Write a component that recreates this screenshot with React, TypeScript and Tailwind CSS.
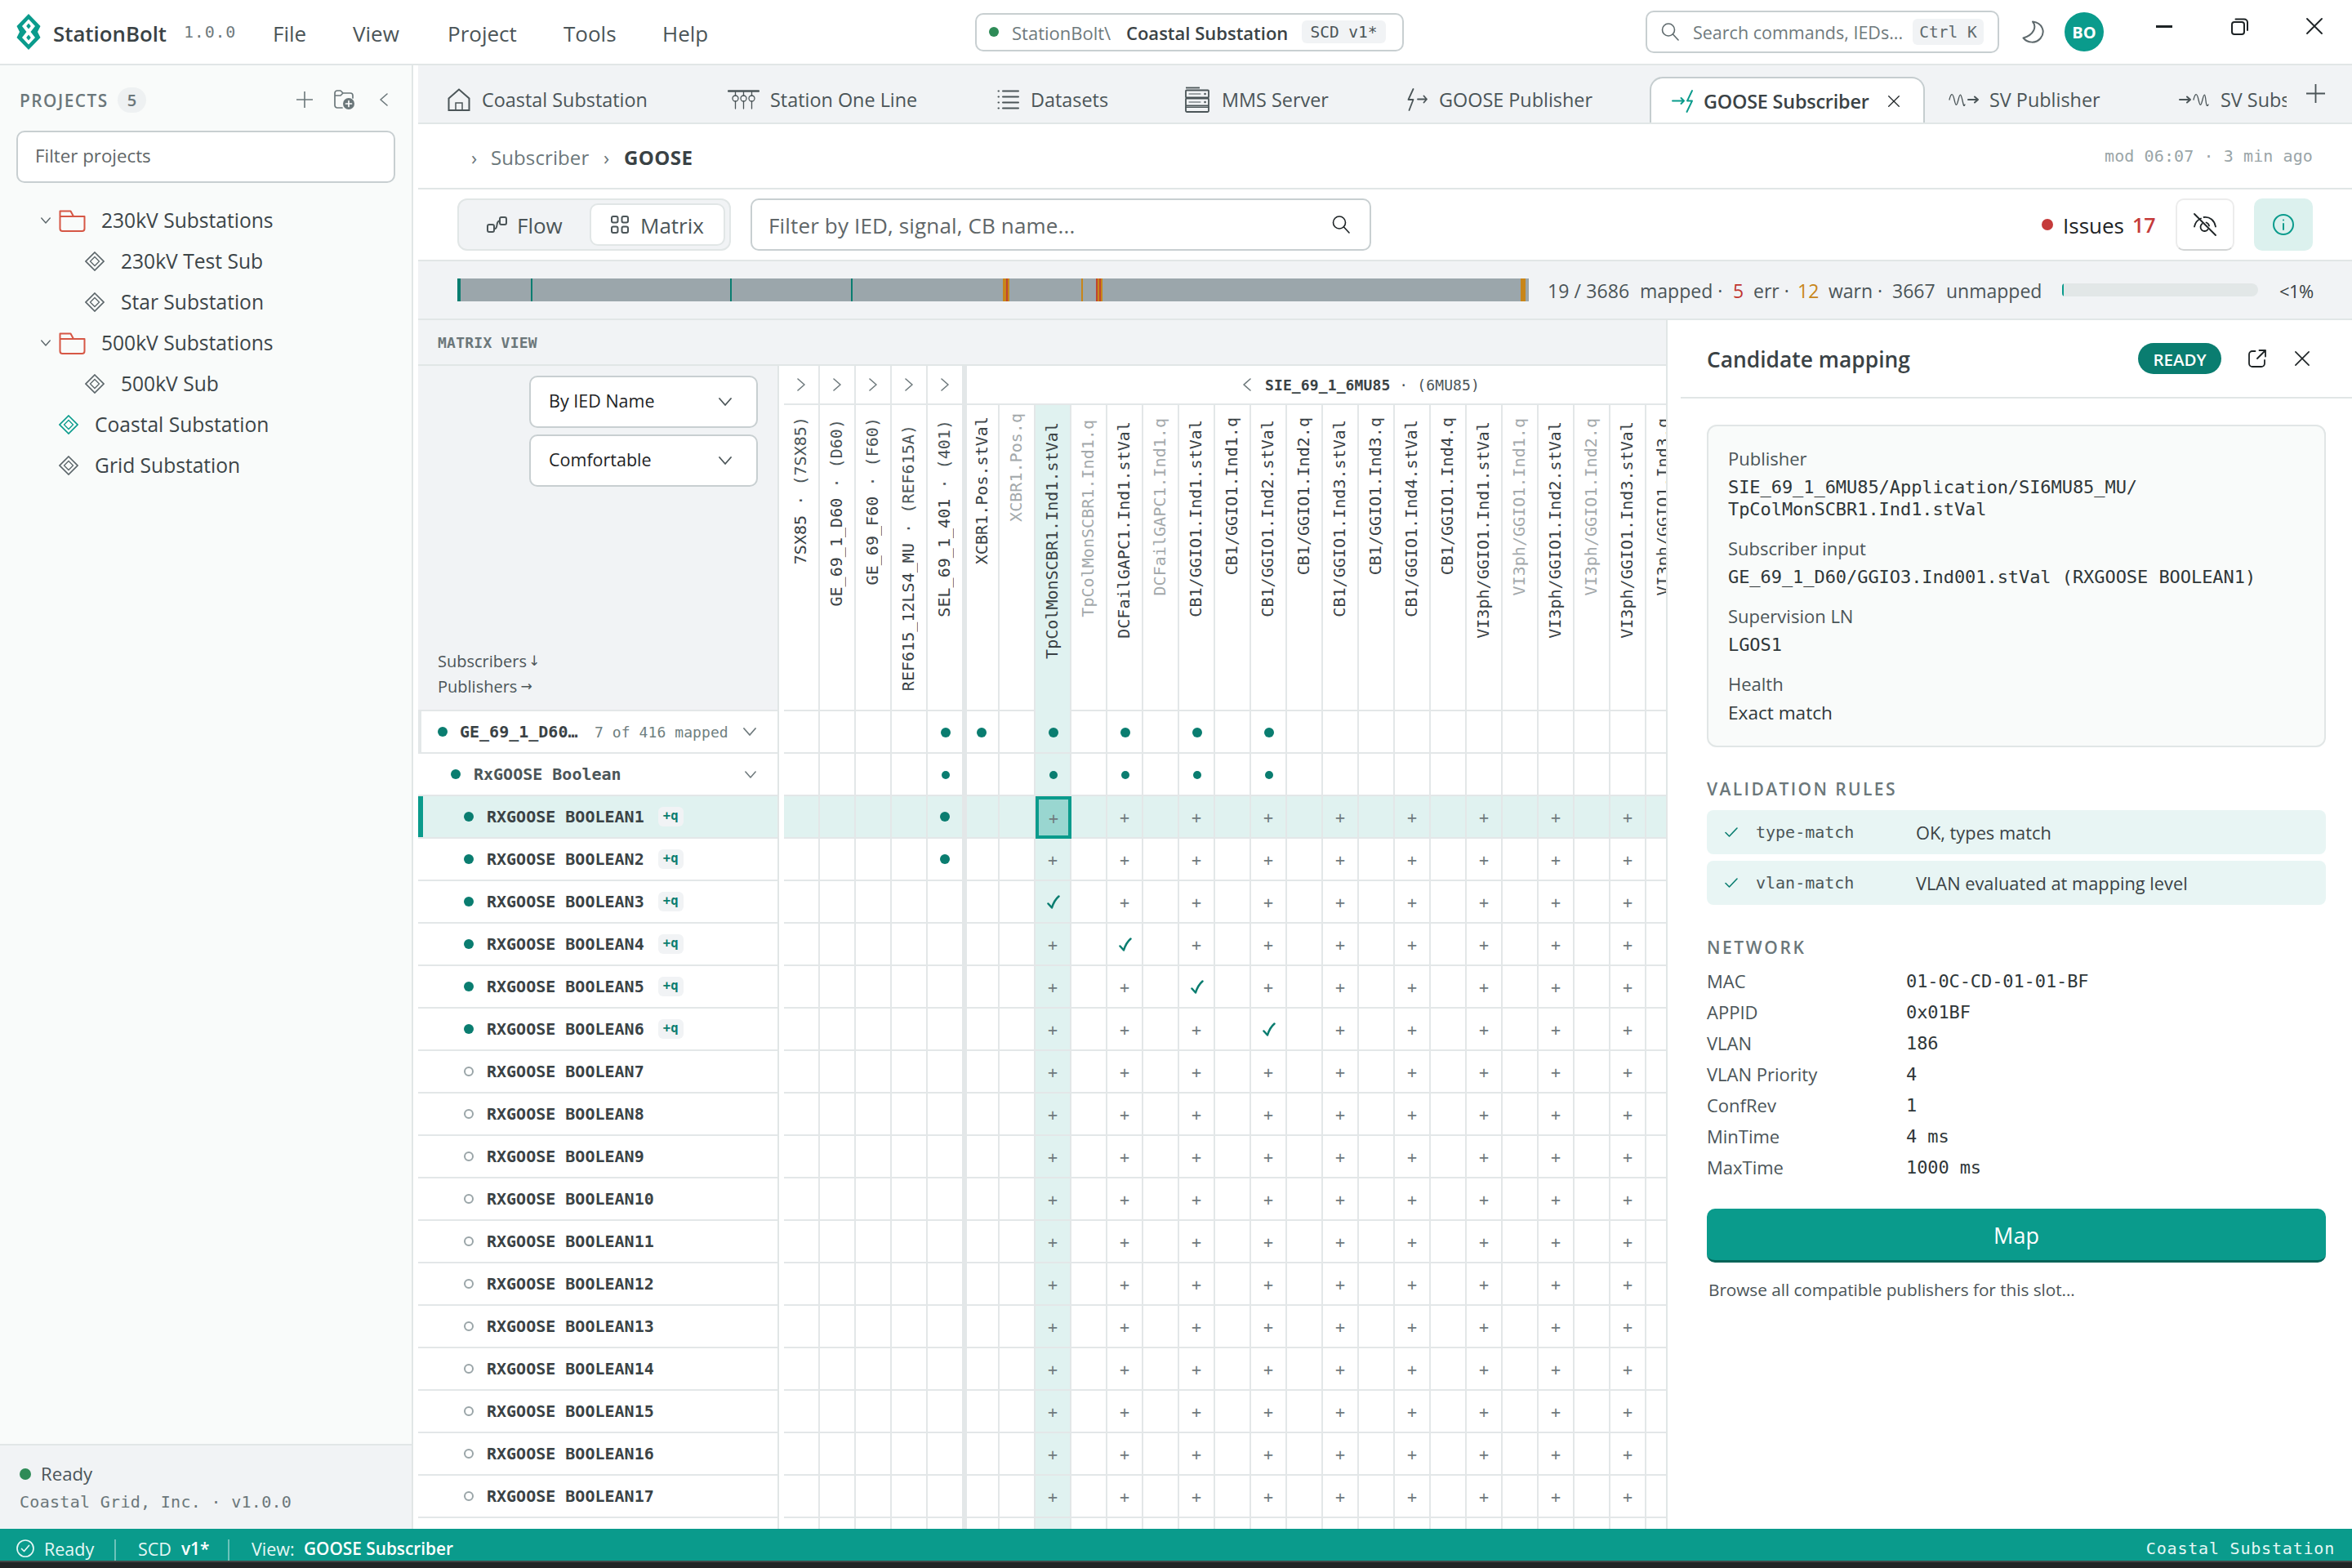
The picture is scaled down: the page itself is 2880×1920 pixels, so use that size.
import type { ReactNode } from "react";
import clsx from "clsx";

const MONO = "[font-family:'DejaVu_Sans_Mono',monospace]";

type IconProps = { className?: string };

function Svg({ box, className, width = 2, children }: { box: string; className?: string; width?: number; children: ReactNode }) {
  return (
    <svg
      viewBox={box}
      className={clsx("shrink-0", className)}
      fill="none"
      stroke="currentColor"
      strokeWidth={width}
      strokeLinecap="round"
      strokeLinejoin="round"
    >
      {children}
    </svg>
  );
}

function Logo() {
  return (
    <svg viewBox="0 0 30 44" className="h-11 w-[30px]" fill="#0a9b8c">
      <path
        fillRule="evenodd"
        d="M15 0 29.5 15 26 22l3.5 7L15 44 .5 29 4 22 .5 15ZM15 6.5 7 15l5.500 7L7 29l8 8.5 8-8.5-5.500-7 5.500-7Z"
      />
      <path d="m15 11.500 2.800 3.500-2.800 3.500-2.800-3.500ZM15 25.500l2.800 3.500-2.800 3.500-2.800-3.500Z" />
    </svg>
  );
}

const SearchIcon = ({ className }: IconProps) => (
  <Svg box="0 0 22 22" width={1.6} className={className}>
    <circle cx="9" cy="8.5" r="7.5" />
    <path d="m14.5 14 6.5 7" />
  </Svg>
);

const CloseIcon = ({ className }: IconProps) => (
  <Svg box="0 0 20 20" width={1.8} className={className}>
    <path d="m1 1 18 18M19 1 1 19" />
  </Svg>
);

const PlusIcon = ({ className }: IconProps) => (
  <Svg box="0 0 20 20" width={1.6} className={className}>
    <path d="M10 0v20M0 10h20" />
  </Svg>
);

const Chevron = ({ className }: IconProps) => (
  <Svg box="0 0 16 10" width={1.8} className={className}>
    <path d="m1 1 7 8 7-8" />
  </Svg>
);

const ChevronSide = ({ className }: IconProps) => (
  <Svg box="0 0 10 16" width={1.6} className={className}>
    <path d="m1 1 8 7-8 7" />
  </Svg>
);

const CheckIcon = ({ className }: IconProps) => (
  <Svg box="0 0 16 12" width={1.6} className={className}>
    <path d="m1 6.5 4.5 4.5L15 1" />
  </Svg>
);

const FolderIcon = () => (
  <Svg box="0 0 33 27" className="h-[27px] w-[33px] text-[#d65745]">
    <path d="M1.5 8V1.5h13L18 8M1.5 8h30v15a3 3 0 0 1-3 3h-24a3 3 0 0 1-3-3Z" />
  </Svg>
);

const DiamondIcon = ({ className }: IconProps) => (
  <Svg box="0 0 24 24" width={1.7} className={clsx("size-6", className)}>
    <path strokeLinejoin="miter" d="M12 1 23 12 12 23 1 12Z" />
    <path strokeLinejoin="miter" strokeWidth={1.3} d="m12 6.5 5.5 5.5-5.5 5.5L6.5 12Z" />
  </Svg>
);

const FolderAddIcon = () => (
  <Svg box="0 0 25 24" width={1.7} className="h-6 w-[25px]">
    <path d="M10 22H4a3 3 0 0 1-3-3V4a3 3 0 0 1 3-3h4l3 3h9a3 3 0 0 1 3 3v3M1 7h7l3-3" />
    <circle cx="18" cy="17" r="7" fill="currentColor" stroke="none" />
    <path stroke="#fff" d="M18 13.5v7M14.5 17h7" />
  </Svg>
);

const HomeIcon = () => (
  <Svg box="0 0 28 28" className="size-7">
    <path strokeLinejoin="miter" d="M1.5 12.5 14 1.5l12.5 11V27h-25Z" />
    <path strokeLinejoin="miter" strokeWidth={1.5} d="M10 27v-9h8v9" />
  </Svg>
);

const OneLineIcon = () => (
  <Svg box="0 0 39 24" width={1.3} className="h-6 w-[39px]">
    <path strokeWidth={2.5} d="M1 1.5h37" />
    <path d="M9.5 2v5M19.5 2v5M29.5 2v5M9.5 14v9M19.5 14v9M29.5 14v9" />
    <circle cx="9.5" cy="10.5" r="3.5" />
    <circle cx="19.5" cy="10.5" r="3.5" />
    <circle cx="29.5" cy="10.5" r="3.5" />
  </Svg>
);

const DatasetsIcon = () => (
  <Svg box="0 0 27 24" className="h-6 w-[27px]">
    <path d="M7 1.5h19M7 8.5h19M7 15.5h19M7 22.5h19M1.5 1.5h.5M1.5 8.5h.5M1.5 15.5h.5M1.5 22.5h.5" />
  </Svg>
);

const ServerIcon = () => (
  <Svg box="0 0 30 32" width={1.8} className="h-8 w-[30px]">
    <path strokeLinecap="butt" d="M1 1.5h17" />
    <rect x="1" y="4.5" width="28" height="9" rx="1" />
    <rect x="1" y="14.5" width="28" height="9" rx="1" />
    <path d="M1 24v5.5A1.5 1.5 0 0 0 2.5 31h25a1.5 1.5 0 0 0 1.5-1.5V24" />
    <path strokeWidth={1} d="M5 9h14M5 19h14M1 25.5h28" />
    <path strokeWidth={2.5} d="M24.5 9h.1M24.5 19h.1" />
  </Svg>
);

const GoosePubIcon = () => (
  <Svg box="0 0 25 28" width={1.8} className="h-7 w-[25px]">
    <path d="M7.5 1 1.5 14h6L2.5 27M13 13.5h11M20.5 9.5l3.5 4-3.5 4" />
  </Svg>
);

const GooseSubIcon = () => (
  <Svg box="0 0 26 28" width={1.9} className="h-7 w-[26px] text-[#0a9b8c]">
    <path d="M1 13.5h14M11.5 10l3.5 3.5-3.5 3.5M25 1l-6 12.5h6L18.5 27" />
  </Svg>
);

const SvPubIcon = () => (
  <Svg box="0 0 37 16" width={1.3} className="h-4 w-[37px]">
    <path d="M1 8C3 0 5-1 7 8s3 8 5 0 3-8 5 1 2 7 3 5" />
    <path strokeWidth={2} d="M24 8h12M32 4.5 36 8l-4 3.5" />
  </Svg>
);

const SvSubIcon = () => (
  <Svg box="0 0 37 16" width={1.3} className="h-4 w-[37px]">
    <path strokeWidth={2} d="M1 8h13M10 4.5 14 8l-4 3.5" />
    <path d="M18 8c2-8 4-9 6 0s3 8 5 0 3-8 4 1 2 7 3 5" />
  </Svg>
);

const MENU = [
  { label: "File", width: "w-[98px]" },
  { label: "View", width: "w-[116px]" },
  { label: "Project", width: "w-[142px]" },
  { label: "Tools", width: "w-[121px]" },
  { label: "Help", width: "w-[80px]" },
];

function TitleBar() {
  return (
    <header className="flex h-20 shrink-0 items-center border-b-2 border-[#e1e6e6] bg-white">
      <div className="flex w-[1194px] items-center">
        <div className="ml-5 w-[45px]">
          <Logo />
        </div>
        <span className="w-[160px] pt-1 text-[25.8px] font-semibold text-[#3a4245]">StationBolt</span>
        <span className={clsx(MONO, "w-[109px] text-[20px] tracking-[0.8px] text-[#6f7a7d]")}>1.0.0</span>
        {MENU.map((m) => (
          <span key={m.label} className={clsx("shrink-0 pt-1 text-[26px] text-[#4b5558]", m.width)}>
            {m.label}
          </span>
        ))}
      </div>
      <div className="flex h-[47px] w-[525px] items-center rounded-[10px] border-2 border-[#c8cfd1] pl-[15px] text-[22px]">
        <span className="size-3 rounded-full bg-[#2e8b57]" />
        <span className="ml-4 w-[140px] pt-0.5 text-[#6f7a7d]">StationBolt\</span>
        <span className="w-[215px] pt-0.5 font-semibold text-[#3a4245]">Coastal Substation</span>
        <span className={clsx(MONO, "flex h-7 w-[103px] items-center justify-center rounded-md bg-[#f1f3f5] pt-0.5 text-[19.5px] text-[#4b5558]")}>
          SCD v1*
        </span>
      </div>
      <div className="ml-[296px] flex h-[52px] w-[433px] items-center rounded-[10px] border-2 border-[#c8cfd1] pl-[17px]">
        <SearchIcon className="size-[22px] text-[#5f6a6d]" />
        <span className="ml-[17px] w-[269px] whitespace-nowrap pt-0.5 text-[21.5px] text-[#6f7a7d]">Search commands, IEDs...</span>
        <span className={clsx(MONO, "flex h-8 w-[87px] items-center justify-center rounded-md bg-[#f1f3f5] pt-0.5 text-[19.5px] text-[#5f6a6d]")}>
          Ctrl K
        </span>
      </div>
      <Svg box="0 0 28 28" className="ml-7 size-7 text-[#5f6a6d]">
        <path d="M13 1.5c5 6 2 16-11.5 20C7 28 17 28.5 22.5 22 29 14 25 3 13 1.5Z" />
      </Svg>
      <span className="ml-6 flex size-12 items-center justify-center rounded-full bg-[#0a9b8c] pt-0.5 text-[20px] font-bold text-white">BO</span>
      <div className="mb-3.5 ml-16 flex items-center text-[#1d2325]">
        <span className="h-[3px] w-5 bg-current" />
        <Svg box="0 0 21 21" className="ml-[72px] size-[21px]">
          <rect x="1" y="5" width="15" height="15" rx="3" />
          <path d="M5.5 1.5H16a4 4 0 0 1 4 4V15" />
        </Svg>
        <CloseIcon className="ml-[71px] size-5" />
      </div>
    </header>
  );
}

function TreeFolder({ label }: { label: string }) {
  return (
    <div className="flex h-[50px] items-center pl-[50px]">
      <Chevron className="h-2 w-3 text-[#5c666a]" />
      <span className="ml-2.5 flex w-[52px]">
        <FolderIcon />
      </span>
      {label}
    </div>
  );
}

function TreeItem({ label, nested, active }: { label: string; nested?: boolean; active?: boolean }) {
  return (
    <div className={clsx("flex h-[50px] items-center gap-5", nested ? "pl-[104px]" : "pl-[72px]")}>
      <DiamondIcon className={active ? "text-[#0a9b8c]" : "text-[#5c666a]"} />
      {label}
    </div>
  );
}

function Sidebar() {
  return (
    <aside className="flex w-[506px] shrink-0 flex-col border-r-2 border-[#e1e6e6] bg-[#f9fbfa]">
      <div className="flex h-20 items-center pl-6 pt-1 text-[#6b777a]">
        <span className="w-[120px] pt-1 text-[20.8px] font-semibold tracking-[1.5px]">PROJECTS</span>
        <span className="flex h-[31px] w-[35px] items-center justify-center rounded-full bg-[#eef1f2] pt-px text-[20px] font-semibold">5</span>
        <PlusIcon className="ml-[184px] size-5" />
        <span className="ml-[26px]">
          <FolderAddIcon />
        </span>
        <ChevronSide className="ml-[31px] h-[18px] w-[10px] rotate-180" />
      </div>
      <div className="ml-5 flex h-16 w-[464px] items-center rounded-[10px] border-2 border-[#c8cfd1] bg-white pb-[3px] pl-[21px] text-[22.3px] text-[#5f6668]">
        Filter projects
      </div>
      <nav className="mt-[21px] flex flex-1 flex-col whitespace-nowrap text-[24.6px] text-[#3c4548]">
        <TreeFolder label="230kV Substations" />
        <TreeItem nested label="230kV Test Sub" />
        <TreeItem nested label="Star Substation" />
        <TreeFolder label="500kV Substations" />
        <TreeItem nested label="500kV Sub" />
        <TreeItem active label="Coastal Substation" />
        <TreeItem label="Grid Substation" />
      </nav>
      <div className="h-[104px] border-t-2 border-[#e1e6e6] bg-[#f1f3f5] pl-6 pt-[18px]">
        <div className="flex h-[34px] items-center gap-3 text-[22.2px] text-[#4b5558]">
          <span className="size-3.5 rounded-full bg-[#2e8b57]" />
          Ready
        </div>
        <div className={clsx(MONO, "flex h-[34px] items-center whitespace-nowrap text-[20px] tracking-[0.3px] text-[#6b777a]")}>
          Coastal Grid, Inc. · v1.0.0
        </div>
      </div>
    </aside>
  );
}

const TABS = [
  { label: "Coastal Substation", icon: HomeIcon, width: "w-[343px]", gap: "gap-3.5" },
  { label: "Station One Line", icon: OneLineIcon, width: "w-[330px]", gap: "gap-[13px]" },
  { label: "Datasets", icon: DatasetsIcon, width: "w-[230px]", gap: "gap-3.5" },
  { label: "MMS Server", icon: ServerIcon, width: "w-[272px]", gap: "gap-[15px]" },
  { label: "GOOSE Publisher", icon: GoosePubIcon, width: "w-[297px]", gap: "gap-3.5" },
];

function TabBar() {
  return (
    <div className="flex h-[72px] shrink-0 items-end border-b-2 border-[#e1e6e6] bg-[#f1f3f5] pl-9 text-[23.4px] text-[#4b5558]">
      {TABS.map(({ label, icon: Icon, width, gap }) => (
        <div key={label} className={clsx("flex h-[57px] shrink-0 items-center whitespace-nowrap", width, gap)}>
          <Icon />
          <span className="pt-0.5">{label}</span>
        </div>
      ))}
      <div className="flex h-14 w-[337px] shrink-0 items-center rounded-t-2xl border-2 border-b-0 border-[#c5cdcf] bg-white pl-[25px] pt-0.5 text-[#3a4245]">
        <GooseSubIcon />
        <span className="ml-[13px] w-[226px] whitespace-nowrap pt-0.5 font-semibold tracking-[-0.2px]">GOOSE Subscriber</span>
        <CloseIcon className="size-3.5 text-[#1d2325]" />
      </div>
      <div className="flex h-[57px] w-[443px] items-center overflow-hidden whitespace-nowrap pl-[29px]">
        <SvPubIcon />
        <span className="ml-[13px] w-[232px] shrink-0 pt-0.5">SV Publisher</span>
        <SvSubIcon />
        <span className="ml-3.5 pt-0.5">SV Subscriber</span>
      </div>
      <PlusIcon className="mb-6 ml-6 size-[23px]" />
    </div>
  );
}

function Breadcrumb() {
  return (
    <div className="flex h-20 shrink-0 items-center border-b-2 border-[#e1e6e6] pl-[65px] pr-12 pt-[3px] text-[24px] text-[#6b777a]">
      <span className="w-6">›</span>
      <span className="w-[138px] tracking-[0.1px]">Subscriber</span>
      <span className="w-[25px]">›</span>
      <span className="flex-1 font-bold tracking-[0.4px] text-[#3a4245]">GOOSE</span>
      <span className={clsx(MONO, "pb-1 text-[20px] tracking-[0.1px] text-[#9aa5a8]")}>mod 06:07 · 3 min ago</span>
    </div>
  );
}

function Toolbar() {
  return (
    <div className="flex h-[88px] shrink-0 items-center border-b-2 border-[#e1e6e6] px-12 text-[26px] text-[#4b5558]">
      <div className="flex h-16 w-[335px] items-center rounded-xl border-2 border-[#e1e6e6] bg-[#f1f3f5]">
        <div className="flex w-[160px] items-center gap-3 pl-[34px]">
          <Svg box="0 0 25 20" className="h-5 w-[25px]">
            <rect x="1" y="10" width="8" height="9" rx="2" />
            <rect x="16" y="1" width="8" height="9" rx="2" />
            <path d="M9 15.5c6 0 1-10 7-10" />
          </Svg>
          <span className="pt-0.5">Flow</span>
        </div>
        <div className="flex h-[52px] w-[166px] items-center gap-3.5 rounded-[10px] border-2 border-[#e1e6e6] bg-white pl-6">
          <Svg box="0 0 22 22" className="size-[22px]">
            <rect x="1" y="1" width="7.5" height="7.5" rx="2" />
            <rect x="13.5" y="1" width="7.5" height="7.5" rx="2" />
            <rect x="1" y="13.5" width="7.5" height="7.5" rx="2" />
            <rect x="13.5" y="13.5" width="7.5" height="7.5" rx="2" />
          </Svg>
          <span className="pt-0.5">Matrix</span>
        </div>
      </div>
      <div className="ml-6 flex h-16 w-[760px] items-center justify-between rounded-[10px] border-2 border-[#c8cfd1] pl-5 pr-6 text-[#5f6668]">
        <span className="pt-0.5 tracking-[0.15px]">Filter by IED, signal, CB name...</span>
        <SearchIcon className="size-[22px] text-[#1d2325]" />
      </div>
      <span className="ml-auto size-3.5 rounded-full bg-[#c53b3b]" />
      <span className="ml-3 pt-0.5 text-[#1d2325]">Issues</span>
      <span className="ml-2.5 w-[53px] pt-0.5 text-[25px] font-semibold text-[#c53b3b]">17</span>
      <button type="button" className="flex h-16 w-[72px] items-center justify-center rounded-[10px] border-2 border-[#ececec] border-b-[#d2d4d4] text-[#1d2325]">
        <Svg box="0 0 28 28" width={1.8} className="size-7">
          <path d="M1 1l26 26M9 6.5C4 8.5 2 12 1 16.5M12.5 5C20 4 25.5 9 27 16.5" />
          <path d="M10.5 13a5 5 0 1 0 7 7M15.5 11.5a5 5 0 0 1 3.5 4" />
        </Svg>
      </button>
      <button type="button" className="ml-6 flex h-16 w-[72px] items-center justify-center rounded-[10px] bg-[#dcf1ee] text-[#0a9b8c]">
        <Svg box="0 0 26 26" className="size-[26px]">
          <circle cx="13" cy="13" r="12" />
          <path d="M13 12v7M13 7.5v.1" />
        </Svg>
      </button>
    </div>
  );
}

// one entry per stretch of the 1312px coverage bar
const COVERAGE = [
  { w: 4, c: "#0a7d70" },
  { w: 86, c: "" },
  { w: 2, c: "#0a7d70" },
  { w: 242, c: "" },
  { w: 2, c: "#0a7d70" },
  { w: 146, c: "" },
  { w: 2, c: "#0a7d70" },
  { w: 184, c: "" },
  { w: 4, c: "#c8861a" },
  { w: 2, c: "#c0452f" },
  { w: 2, c: "#c8861a" },
  { w: 88, c: "" },
  { w: 2, c: "#c8861a" },
  { w: 16, c: "" },
  { w: 2, c: "#c0452f" },
  { w: 2, c: "#c8861a" },
  { w: 2, c: "#c0452f" },
  { w: 2, c: "#c8861a" },
  { w: 512, c: "" },
  { w: 6, c: "#c8861a" },
  { w: 4, c: "" },
];

function CoverageStrip() {
  return (
    <div className="flex h-[72px] shrink-0 items-center whitespace-nowrap border-b-2 border-[#e1e6e6] bg-[#f1f3f5] pl-12 text-[23px] text-[#4b5558]">
      <div className="flex h-7 w-[1312px] shrink-0 bg-[#9ba6ab]">
        {COVERAGE.map((s, i) => (
          <span key={i} style={{ width: s.w, background: s.c || undefined }} />
        ))}
      </div>
      <div className="flex w-[653px] shrink-0 pl-[23px] pt-0.5">
        <span className="w-[113px] tracking-[0.1px]">19 / 3686</span>
        <span className="w-[114px]">mapped ·</span>
        <span className="w-[25px] text-[#c0352f]">5</span>
        <span className="w-[54px]">err ·</span>
        <span className="w-[38px] text-[#c8861a]">12</span>
        <span className="w-[78px]">warn ·</span>
        <span className="w-[66px]">3667</span>
        <span>unmapped</span>
      </div>
      <div className="h-4 w-[240px] shrink-0 overflow-hidden rounded-l-sm rounded-r-lg bg-[#e2e7e7]">
        <div className="h-full w-0.5 bg-[#0a9b8c]" />
      </div>
      <span className="ml-[26px] pt-0.5 text-[22px] tracking-[-0.6px] text-[#3a4245]">&lt;1%</span>
    </div>
  );
}

type Column = { name: string; type?: string; muted?: boolean; mappable?: boolean };

const COLUMNS: Column[] = [
  { name: "7SX85", type: "(7SX85)" },
  { name: "GE_69_1_D60", type: "(D60)" },
  { name: "GE_69_F60", type: "(F60)" },
  { name: "REF615_12LS4_MU", type: "(REF615A)" },
  { name: "SEL_69_1_401", type: "(401)" },
  { name: "XCBR1.Pos.stVal" },
  { name: "XCBR1.Pos.q", muted: true },
  { name: "TpColMonSCBR1.Ind1.stVal", mappable: true },
  { name: "TpColMonSCBR1.Ind1.q", muted: true },
  { name: "DCFailGAPC1.Ind1.stVal", mappable: true },
  { name: "DCFailGAPC1.Ind1.q", muted: true },
  { name: "CB1/GGIO1.Ind1.stVal", mappable: true },
  { name: "CB1/GGIO1.Ind1.q" },
  { name: "CB1/GGIO1.Ind2.stVal", mappable: true },
  { name: "CB1/GGIO1.Ind2.q" },
  { name: "CB1/GGIO1.Ind3.stVal", mappable: true },
  { name: "CB1/GGIO1.Ind3.q" },
  { name: "CB1/GGIO1.Ind4.stVal", mappable: true },
  { name: "CB1/GGIO1.Ind4.q" },
  { name: "VI3ph/GGIO1.Ind1.stVal", mappable: true },
  { name: "VI3ph/GGIO1.Ind1.q", muted: true },
  { name: "VI3ph/GGIO1.Ind2.stVal", mappable: true },
  { name: "VI3ph/GGIO1.Ind2.q", muted: true },
  { name: "VI3ph/GGIO1.Ind3.stVal", mappable: true },
  { name: "VI3ph/GGIO1.Ind3.q" },
];

const FIRST_SIGNAL = 5;
const SELECTED_COL = 7;
const GROUP_DOTS = [4, 5, 7, 9, 11, 13];
const SUBGROUP_DOTS = [4, 7, 9, 11, 13];
// input number -> column that already carries its mapping
const MAPPED: Record<number, number> = { 3: 7, 4: 9, 5: 11, 6: 13 };

const INPUTS = Array.from({ length: 17 }, (_, i) => i + 1);

function Cell({ col, selectedRow, children }: { col: number; selectedRow?: boolean; children?: ReactNode }) {
  return (
    <div
      className={clsx(
        "flex h-13 w-11 shrink-0 items-center justify-center border-b-2 border-r-2 border-[#e3e7e8]",
        col === FIRST_SIGNAL && "border-l-4",
        (selectedRow || col === SELECTED_COL) && "bg-[#e0f2f0]",
      )}
    >
      {children}
    </div>
  );
}

function inputCell(input: number, col: number) {
  if (col === 4 && input <= 2) return <span className="size-3 rounded-full bg-[#0a7d70]" />;
  if (MAPPED[input] === col) {
    return (
      <Svg box="0 0 16 17" width={2.5} className="ml-0.5 h-[17px] w-4 text-[#0a7d70]">
        <path d="M1.5 10.5 6 15.5C8 9 11 4.5 14.5 1.5" />
      </Svg>
    );
  }
  if (COLUMNS[col].mappable) return <span className={clsx(MONO, "pt-px text-[20px] leading-none text-[#6f7a7d]")}>+</span>;
  return null;
}

function MatrixHeader() {
  return (
    <>
      <div className="flex h-12">
        {COLUMNS.slice(0, FIRST_SIGNAL).map((c) => (
          <div key={c.name} className="flex w-11 shrink-0 items-center justify-center border-b-2 border-r-2 border-[#e3e7e8]">
            <ChevronSide className="h-4 w-[10px] text-[#6f7a7d]" />
          </div>
        ))}
        <div className={clsx(MONO, "flex flex-1 items-center border-b-2 border-l-4 border-[#e3e7e8] pl-[338px] text-[18px] tracking-[0.12px] text-[#3a4245]")}>
          <ChevronSide className="mr-[17px] h-4 w-[10px] rotate-180 text-[#6f7a7d]" />
          <span className="font-bold">SIE_69_1_6MU85</span>
          <span className="whitespace-pre text-[#4b5558]"> · (6MU85)</span>
        </div>
      </div>
      <div className="flex h-[375px]">
        {COLUMNS.map((c, i) => {
          const text = c.type ? `${c.name} · ${c.type}` : c.name;
          return (
            <div
              key={c.name}
              className={clsx(
                "flex w-11 shrink-0 justify-center border-r-2 border-[#e3e7e8] pr-0.5",
                i === FIRST_SIGNAL && "border-l-4",
                i === SELECTED_COL ? "bg-[#e0f2f0]" : "border-b-2",
              )}
              style={{ paddingTop: 1 + text.length * 0.85 }}
            >
              <span
                className={clsx(
                  MONO,
                  "h-fit rotate-180 whitespace-nowrap text-[20px] leading-none tracking-[0.04px] [writing-mode:vertical-rl]",
                  c.muted ? "text-[#a3a9ab]" : "text-[#3a4245]",
                )}
              >
                {c.name}
                {c.type && <span className="text-[#4b5558]"> · {c.type}</span>}
              </span>
            </div>
          );
        })}
      </div>
    </>
  );
}

function SelectBox({ label }: { label: string }) {
  return (
    <div className="flex h-16 w-[280px] items-center justify-between rounded-[10px] border-2 border-[#c8cfd1] bg-white pb-px pl-[22px] pr-[30px] text-[21.5px] text-[#1d2325]">
      {label}
      <Chevron className="h-2.5 w-4 text-[#4b5558]" />
    </div>
  );
}

function RowHeaders() {
  return (
    <div className="flex w-[442px] shrink-0 flex-col border-r-2 border-[#e1e6e6]">
      <div className="flex h-[423px] shrink-0 flex-col items-end gap-2 border-b-2 border-[#e3e7e8] bg-[#f1f3f5] pr-6 pt-3 text-[20px] text-[#4b5558]">
        <SelectBox label="By IED Name" />
        <SelectBox label="Comfortable" />
        <div className="mb-[13px] mt-auto w-[392px] leading-[31px]">
          <div className="flex gap-0.5">
            Subscribers<span className="text-[17px] [font-family:'DejaVu_Sans',sans-serif]">↓</span>
          </div>
          <div className="flex gap-1">
            Publishers<span className="text-[17px] [font-family:'DejaVu_Sans',sans-serif]">→</span>
          </div>
        </div>
      </div>
      <div className={clsx(MONO, "text-[20px]")}>
        <div className="flex h-13 items-center border-b-2 border-l-4 border-[#e3e7e8] pl-5">
          <span className="size-3 rounded-full bg-[#0a7d70]" />
          <span className="ml-[15px] w-[165px] font-bold text-[#3a4245]">GE_69_1_D60…</span>
          <span className="w-[182px] text-[18px] tracking-[0.08px] text-[#6f7f80]">7 of 416 mapped</span>
          <Chevron className="h-2.5 w-4 text-[#6f7a7d]" />
        </div>
        <div className="flex h-13 items-center border-b-2 border-[#e3e7e8] pl-10">
          <span className="size-3 rounded-full bg-[#0a7d70]" />
          <span className="ml-4 w-[332px] font-bold text-[#4b5558]">RxGOOSE Boolean</span>
          <Chevron className="h-[9px] w-3.5 text-[#6f7a7d]" />
        </div>
        {INPUTS.map((n) => (
          <div
            key={n}
            className={clsx(
              "flex h-13 items-center border-b-2 border-[#e3e7e8] pl-14",
              n === 1 && "bg-[linear-gradient(90deg,#0a9b8c_6px,#e0f2f0_6px)]",
            )}
          >
            <span className={clsx("size-3 rounded-full", n <= 6 ? "bg-[#0a7d70]" : "border-2 border-[#9aa5a8]")} />
            <span className="ml-4 font-bold text-[#3a4245]">RXGOOSE BOOLEAN{n}</span>
            {n <= 6 && (
              <span className="ml-[17px] flex h-6 w-[31px] items-center justify-center rounded-md bg-[#f1f3f5] text-[15.5px] font-bold text-[#0a7d70]">
                +q
              </span>
            )}
          </div>
        ))}
      </div>
    </div>
  );
}

function Matrix() {
  return (
    <section className="flex w-[1528px] shrink-0 flex-col overflow-hidden">
      <div className={clsx(MONO, "flex h-14 shrink-0 items-center border-b-2 border-[#e1e6e6] bg-[#f1f3f5] pl-6 text-[18px] font-bold tracking-[0.25px] text-[#6b777a]")}>
        MATRIX VIEW
      </div>
      <div className="flex min-h-0 flex-1 overflow-hidden">
        <RowHeaders />
        <div className="ml-1.5 w-[1080px] shrink-0 overflow-hidden">
          <MatrixHeader />
          <div className="flex">
            {COLUMNS.map((c, i) => (
              <Cell key={c.name} col={i}>
                {GROUP_DOTS.includes(i) && (
                  <span className={clsx("mt-0.5 size-3 rounded-full bg-[#0a7d70]", i === FIRST_SIGNAL ? "mr-0.5" : "ml-0.5")} />
                )}
              </Cell>
            ))}
          </div>
          <div className="flex">
            {COLUMNS.map((c, i) => (
              <Cell key={c.name} col={i}>
                {SUBGROUP_DOTS.includes(i) && <span className="ml-0.5 mt-0.5 size-2.5 rounded-full bg-[#0a7d70]" />}
              </Cell>
            ))}
          </div>
          {INPUTS.map((n) => (
            <div key={n} className="flex">
              {COLUMNS.map((c, i) =>
                n === 1 && i === SELECTED_COL ? (
                  <div key={c.name} className="flex h-13 w-11 shrink-0 items-center justify-center border-4 border-[#0a9b8c] bg-[#99d6d0]">
                    {inputCell(n, i)}
                  </div>
                ) : (
                  <Cell key={c.name} col={i} selectedRow={n === 1}>
                    {inputCell(n, i)}
                  </Cell>
                ),
              )}
            </div>
          ))}
          <div className="flex">
            {COLUMNS.map((c, i) => (
              <Cell key={c.name} col={i} />
            ))}
          </div>
        </div>
      </div>
    </section>
  );
}

const DETAILS = [
  { label: "Publisher", value: ["SIE_69_1_6MU85/Application/SI6MU85_MU/", "TpColMonSCBR1.Ind1.stVal"], mono: true },
  { label: "Subscriber input", value: ["GE_69_1_D60/GGIO3.Ind001.stVal (RXGOOSE BOOLEAN1)"], mono: true },
  { label: "Supervision LN", value: ["LGOS1"], mono: true },
  { label: "Health", value: ["Exact match"] },
];

const RULES = [
  { id: "type-match", message: "OK, types match" },
  { id: "vlan-match", message: "VLAN evaluated at mapping level" },
];

const NETWORK = [
  ["MAC", "01-0C-CD-01-01-BF"],
  ["APPID", "0x01BF"],
  ["VLAN", "186"],
  ["VLAN Priority", "4"],
  ["ConfRev", "1"],
  ["MinTime", "4 ms"],
  ["MaxTime", "1000 ms"],
];

function DetailPanel() {
  return (
    <section className="flex flex-1 flex-col border-l-2 border-[#e1e6e6] pl-4">
      <div className="flex h-24 shrink-0 items-center border-b-2 border-[#e1e6e6] pl-8">
        <h2 className="flex-1 pt-1 text-[26.4px] font-semibold text-[#3a4245]">Candidate mapping</h2>
        <span className="flex h-[38px] w-[102px] items-center justify-center rounded-full bg-[#0a7d70] pt-0.5 text-[20.5px] font-semibold text-white">
          READY
        </span>
        <Svg box="0 0 22 22" width={1.8} className="ml-[33px] size-[22px] text-[#1d2325]">
          <path d="M8.5 2H5a4 4 0 0 0-4 4v11a4 4 0 0 0 4 4h11a4 4 0 0 0 4-4v-4M13.5 1H21v7.5M21 1 11 11" />
        </Svg>
        <CloseIcon className="ml-[35px] mr-[52px] size-[18px] text-[#1d2325]" />
      </div>
      <div className="flex flex-col px-8 pt-8 text-[22px] text-[#4b5558]">
        <div className="flex h-[395px] flex-col rounded-xl border-2 border-[#e1e6e6] bg-[#f9fbfa] pl-6 pt-[23px]">
          {DETAILS.map((d) => (
            <div key={d.label} className="mb-[17px]">
              <div className="h-8 leading-8">{d.label}</div>
              {d.value.map((line, i) => (
                <div
                  key={line}
                  className={clsx(
                    "whitespace-nowrap text-[#2f3739]",
                    d.mono ? "leading-[27px] tracking-[-0.06px] [font-family:'DejaVu_Sans_Mono',monospace]" : "pt-1 text-[22.6px] leading-8",
                    d.mono && i === 0 && "-mt-px pt-[7px]",
                    i === 1 && "mb-px",
                    d.value.length === 1 && d.mono && "mb-px",
                  )}
                >
                  {line}
                </div>
              ))}
            </div>
          ))}
        </div>
        <h3 className="mt-[35px] h-8 text-[21px] font-semibold leading-8 tracking-[2.4px] text-[#6b777a]">VALIDATION RULES</h3>
        <div className="mt-2.5 flex flex-col gap-2">
          {RULES.map((r) => (
            <div key={r.id} className="flex h-[54px] items-center rounded-lg bg-[#e8f5f4] pl-[22px]">
              <CheckIcon className="h-3 w-4 text-[#0a7d70]" />
              <span className={clsx(MONO, "ml-[22px] w-[196px] text-[20px]")}>{r.id}</span>
              <span className="pt-0.5 text-[21.8px] text-[#3a4245]">{r.message}</span>
            </div>
          ))}
        </div>
        <h3 className="mt-[36px] h-8 text-[21px] font-semibold leading-8 tracking-[2.6px] text-[#6b777a]">NETWORK</h3>
        <div className="mt-1.5">
          {NETWORK.map(([label, value]) => (
            <div key={label} className="flex h-[38px] items-center">
              <span className="w-[244px]">{label}</span>
              <span className={clsx(MONO, "text-[22px] tracking-[-0.1px] text-[#2f3739]")}>{value}</span>
            </div>
          ))}
        </div>
        <button type="button" className="mt-8 flex h-[66px] items-center justify-center rounded-[10px] border-b-[3px] border-[#066459] bg-[#0a9b8c] pt-1 text-[27px] text-white">
          Map
        </button>
        <div className="mt-[17px] pl-0.5 text-[20.8px] leading-8 tracking-[-0.05px]">Browse all compatible publishers for this slot...</div>
      </div>
    </section>
  );
}

function StatusBar() {
  return (
    <footer className="shrink-0 bg-[#212526]">
      <div className="flex h-[39px] items-end bg-[#0a9b8c] pl-5 text-[21.5px] leading-[29px] text-[#e6f7f5]">
        <Svg box="0 0 22 22" width={1.7} className="mb-1 size-[22px]">
          <circle cx="11" cy="11" r="10" />
          <path d="m6.5 11.5 3 3 6-7" />
        </Svg>
        <span className="ml-3 w-[86px]">Ready</span>
        <span className="h-[26px] w-0.5 bg-white/40" />
        <span className="ml-[27px] w-[53px]">SCD</span>
        <span className="w-[57px] text-[20.8px] font-semibold text-white">v1*</span>
        <span className="h-[26px] w-0.5 bg-white/40" />
        <span className="ml-[27px] w-16">View:</span>
        <span className="text-[20.8px] font-semibold text-white">GOOSE Subscriber</span>
        <span className={clsx(MONO, "ml-auto mr-[21px] text-[20px] tracking-[0.8px]")}>Coastal Substation</span>
      </div>
      <div className="h-[9px] border-t-2 border-[#3f4646]" />
    </footer>
  );
}

export default function App() {
  return (
    <div className="flex h-[1920px] w-[2880px] flex-col overflow-hidden bg-white [font-family:'Open_Sans',sans-serif]">
      <TitleBar />
      <div className="flex min-h-0 flex-1">
        <Sidebar />
        <main className="ml-1.5 flex min-w-0 flex-1 flex-col">
          <TabBar />
          <Breadcrumb />
          <Toolbar />
          <CoverageStrip />
          <div className="flex min-h-0 flex-1">
            <Matrix />
            <DetailPanel />
          </div>
        </main>
      </div>
      <StatusBar />
    </div>
  );
}
